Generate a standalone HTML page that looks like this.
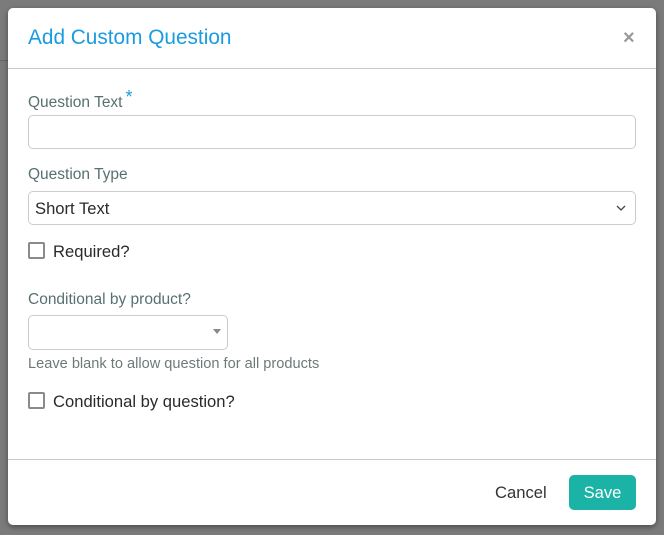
<!DOCTYPE html>
<html><head><style>
body{margin:0;width:664px;height:535px;background:#7b7b7b;position:relative;overflow:hidden;font-family:"Liberation Sans",sans-serif}
.a{position:absolute}
.m{left:8px;top:8px;width:648px;height:517px;background:#fff;border-radius:5px;box-shadow:0 2px 6px rgba(0,0,0,.4)}
.lbl{color:#587070;font-size:15.5px}
.box{border:1px solid #ccc;border-radius:5px;background:#fff;box-sizing:border-box}
.cb{width:17px;height:17px;border:2px solid #8a8a8a;border-radius:2px;box-sizing:border-box}
.t{color:#2a2a2a;font-size:16.6px}
</style></head><body>
<div class="a" style="left:0;top:60px;width:8px;height:1px;background:#666"></div>
<div class="a m"></div>
<div class="a" style="left:28px;top:26px;font-size:20.8px;color:#1a9be0">Add Custom Question</div>
<div class="a" style="left:623px;top:27px;font-size:20px;font-weight:bold;color:#999">×</div>
<div class="a" style="left:8px;top:68px;width:648px;height:1px;background:#c8c8c8"></div>
<div class="a lbl" style="left:28px;top:91px">Question Text<span style="color:#1a9be0;font-size:18px;position:relative;top:-4px;margin-left:3px">*</span></div>
<div class="a box" style="left:28px;top:115px;width:608px;height:34px"></div>
<div class="a lbl" style="left:28px;top:166px">Question Type</div>
<div class="a box" style="left:28px;top:191px;width:608px;height:34px"></div>
<div class="a t" style="left:35px;top:199px">Short Text</div>
<svg class="a" style="left:616px;top:204px" width="10" height="8"><path d="M1 2 L5 6 L9 2" stroke="#444" stroke-width="1.3" fill="none"/></svg>
<div class="a cb" style="left:28px;top:242px"></div>
<div class="a t" style="left:53px;top:242px">Required?</div>
<div class="a lbl" style="left:28px;top:291px">Conditional by product?</div>
<div class="a box" style="left:28px;top:315px;width:200px;height:35px"></div>
<svg class="a" style="left:213px;top:329px" width="9" height="6"><path d="M0 0 L8 0 L4 5Z" fill="#888"/></svg>
<div class="a" style="left:28px;top:356px;font-size:14.6px;color:#6d7a7a">Leave blank to allow question for all products</div>
<div class="a cb" style="left:28px;top:392px"></div>
<div class="a t" style="left:53px;top:392px">Conditional by question?</div>
<div class="a" style="left:8px;top:459px;width:648px;height:1px;background:#c8c8c8"></div>
<div class="a t" style="left:495px;top:483px;color:#333">Cancel</div>
<div class="a" style="left:569px;top:475px;width:67px;height:35px;background:#1ab3a6;border-radius:5px;color:#fff;font-size:16.6px;text-align:center;line-height:35px">Save</div>
</body></html>
